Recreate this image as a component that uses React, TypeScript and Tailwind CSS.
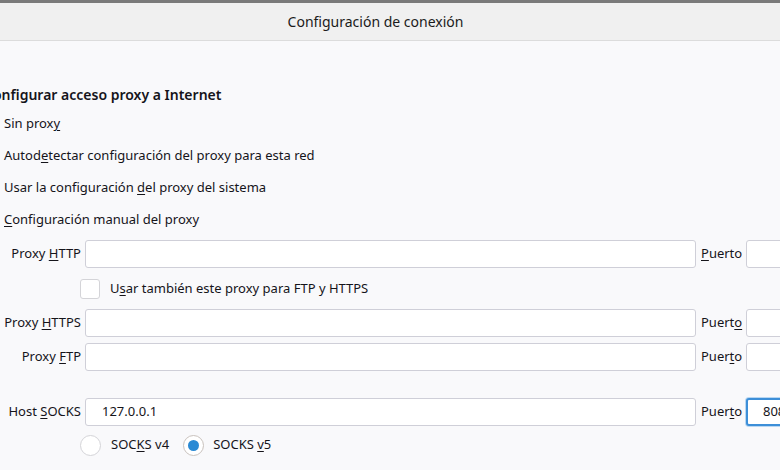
import type { ReactNode } from "react";

function U({ children }: { children: ReactNode }) {
  return <span className="underline underline-offset-2">{children}</span>;
}

function Field({ value = "", focused = false, className = "" }: any) {
  return (
    <div
      className={
        "h-[28px] shrink-0 flex items-center rounded-[3px] bg-white text-[13px] text-[#15141a] " +
        (focused
          ? "border-2 border-[#3d8fd8] shadow-[0_0_0_1px_#b9d7f2] pl-[15px] "
          : "border border-[#cfcfd8] pl-[16px] ") +
        className
      }
    >
      {value}
    </div>
  );
}

function ProxyRow({ label, port, value = "", portValue = "", focused = false }: any) {
  return (
    <div className="flex items-center">
      <div className="w-[81px] shrink-0 text-right whitespace-nowrap">{label}</div>
      <Field value={value} className="ml-[4px] w-[611px]" />
      <div className="ml-[5px] w-[41px] shrink-0 whitespace-nowrap">{port}</div>
      <Field value={portValue} focused={focused} className="ml-[4px] w-[90px]" />
    </div>
  );
}

function Radio({ checked = false }: { checked?: boolean }) {
  return (
    <div
      className={
        "w-[21px] h-[21px] rounded-full bg-white border flex items-center justify-center " +
        (checked ? "border-[#c9c2bd]" : "border-[#d4d4d8]")
      }
    >
      {checked && <div className="w-[11px] h-[11px] rounded-full bg-[#2a8ad4]" />}
    </div>
  );
}

export default function App() {
  return (
    <div className="w-[780px] h-[470px] overflow-hidden bg-[#f9f9fb] text-[#15141a] text-[13px] font-['Noto_Sans','Open_Sans',sans-serif]">
      {/* Window edge */}
      <div className="h-[3px] bg-[#7a7a7a]" />

      {/* Title bar */}
      <div className="h-[38px] bg-[#f0f0f0] border-b border-[#dcdcdc] flex items-center justify-center pr-[29px]">
        <span className="text-[14px] text-[#1b1b1b]">Configuración de conexión</span>
      </div>

      {/* Heading */}
      <div className="mt-[43px] ml-[-16px] h-5 flex items-center text-[14px] font-semibold whitespace-nowrap">
        <span>Configurar acceso proxy a Internet</span>
      </div>

      {/* Options */}
      <div className="mt-1 ml-[4px]">
        <div className="h-8 flex items-center">
          <span>Sin prox<U>y</U></span>
        </div>
        <div className="h-8 flex items-center">
          <span>Autod<U>e</U>tectar configuración del proxy para esta red</span>
        </div>
        <div className="h-8 flex items-center">
          <span>Usar la configuración <U>d</U>el proxy del sistema</span>
        </div>
        <div className="h-8 flex items-center">
          <span><U>C</U>onfiguración manual del proxy</span>
        </div>
      </div>

      {/* Manual config */}
      <div className="mt-[4px]">
        <ProxyRow
          label={<>Proxy <U>H</U>TTP</>}
          port={<><U>P</U>uerto</>}
        />

        <div className="h-[41px] flex items-center ml-[80px] gap-[10px]">
          <div className="w-[20px] h-[20px] rounded-[3px] bg-white border border-[#d4d4d8]" />
          <span>
            U<U>s</U>ar también este proxy para FTP y HTTPS
          </span>
        </div>

        <div className="flex flex-col gap-[6px]">
          <ProxyRow
            label={<>Proxy <U>H</U>TTPS</>}
            port={<>Puert<U>o</U></>}
          />
          <ProxyRow
            label={<>Proxy <U>F</U>TP</>}
            port={<>Puer<U>t</U>o</>}
          />
        </div>

        <div className="mt-[27px]">
          <ProxyRow
            label={<>Host <U>S</U>OCKS</>}
            port={<>Puer<U>t</U>o</>}
            value="127.0.0.1"
            portValue="8080"
            focused
          />
        </div>

        <div className="h-[38px] flex items-center ml-[80px]">
          <Radio />
          <span className="ml-[10px]">
            SOC<U>K</U>S v4
          </span>
          <div className="ml-[14px]">
            <Radio checked />
          </div>
          <span className="ml-[9px]">
            SOCKS <U>v</U>5
          </span>
        </div>
      </div>
    </div>
  );
}
